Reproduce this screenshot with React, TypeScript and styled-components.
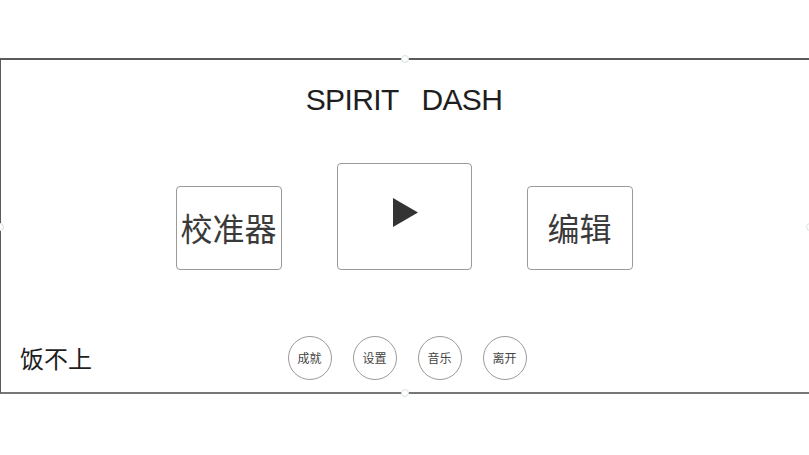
import React from "react";
import styled, { createGlobalStyle } from "styled-components";

const GlobalStyle = createGlobalStyle`
  html, body {
    margin: 0;
    padding: 0;
    background: #ffffff;
    overflow: hidden;
  }
  body {
    font-family: "Liberation Sans", "Noto Sans CJK SC", sans-serif;
    color: #222;
  }
`;

const Page = styled.div`
  width: 809px;
  height: 455px;
  padding-top: 58px;
  box-sizing: border-box;
  overflow: hidden;
`;

const Frame = styled.div`
  position: relative;
  width: 812px;
  height: 336px;
  box-sizing: border-box;
  border: 2px solid #5a5a5a;
  border-left-width: 1px;
  border-bottom-color: #777;
  display: flex;
  flex-direction: column;
  align-items: stretch;
`;

const Handle = styled.span<{ $pos: "top" | "bottom" | "left" | "right" }>`
  position: absolute;
  width: 6px;
  height: 6px;
  border-radius: 50%;
  border: 1px solid #d6e2de;
  background: #ffffff;
  ${({ $pos }) =>
    $pos === "top"
      ? "top: -5px; left: 400px;"
      : $pos === "bottom"
      ? "bottom: -5px; left: 400px;"
      : $pos === "left"
      ? "left: -5px; top: 163px;"
      : "right: -4px; top: 163px;"}
`;

const Title = styled.h1`
  margin: 25px 0 0;
  width: 809px;
  padding-right: 3px;
  box-sizing: border-box;
  text-align: center;
  font-family: "Liberation Sans", Arial, sans-serif;
  font-weight: 400;
  font-size: 30px;
  line-height: 30px;
  letter-spacing: -0.6px;
  color: #1e1e1e;
  white-space: pre;
`;

const MainRow = styled.div`
  margin-top: 48px;
  width: 809px;
  display: flex;
  justify-content: center;
  align-items: flex-end;
  gap: 55px;
  padding-right: 3px;
  box-sizing: border-box;
`;

const BoxButton = styled.button<{ $w: number; $h: number }>`
  width: ${({ $w }) => $w}px;
  height: ${({ $h }) => $h}px;
  box-sizing: border-box;
  border: 1px solid #9a9a9a;
  border-radius: 4px;
  background: #ffffff;
  padding: 0 0 3px;
  display: flex;
  align-items: center;
  justify-content: center;
  font-family: "Noto Sans CJK SC", sans-serif;
  font-size: 32px;
  line-height: 1;
  color: #3a3a3a;
  cursor: pointer;
`;

const BottomRow = styled.div`
  margin-top: 66px;
  width: 809px;
  display: grid;
  grid-template-columns: 1fr auto 1fr;
  align-items: center;
  padding: 0 19px;
  box-sizing: border-box;
`;

const Name = styled.div`
  font-family: "Noto Sans CJK SC", sans-serif;
  font-size: 24px;
  line-height: 1;
  color: #1e1e1e;
`;

const CircleGroup = styled.div`
  display: flex;
  gap: 21px;
  padding-left: 3px;
`;

const CircleButton = styled.button`
  width: 44px;
  height: 44px;
  border-radius: 50%;
  border: 1px solid #9a9a9a;
  background: #ffffff;
  padding: 0;
  display: flex;
  align-items: center;
  justify-content: center;
  font-family: "Noto Sans CJK SC", sans-serif;
  font-size: 12px;
  line-height: 1;
  color: #444;
  cursor: pointer;
`;

const PlayGlyph = styled.svg`
  display: block;
  margin: 0 0 5px 3px;
`;

const PlayIcon = () => (
  <PlayGlyph width="25" height="29" viewBox="0 0 25 29">
    <polygon points="0,0 25,14.5 0,29" fill="#333333" />
  </PlayGlyph>
);

export default function App() {
  return (
    <>
      <GlobalStyle />
      <Page>
        <Frame>
          <Handle $pos="top" />
          <Handle $pos="bottom" />
          <Handle $pos="left" />
          <Handle $pos="right" />
          <Title>{"SPIRIT   DASH"}</Title>
          <MainRow>
            <BoxButton $w={106} $h={84}>校准器</BoxButton>
            <BoxButton $w={135} $h={107}>
              <PlayIcon />
            </BoxButton>
            <BoxButton $w={106} $h={84}>编辑</BoxButton>
          </MainRow>
          <BottomRow>
            <Name>饭不上</Name>
            <CircleGroup>
              <CircleButton>成就</CircleButton>
              <CircleButton>设置</CircleButton>
              <CircleButton>音乐</CircleButton>
              <CircleButton>离开</CircleButton>
            </CircleGroup>
            <div />
          </BottomRow>
        </Frame>
      </Page>
    </>
  );
}
